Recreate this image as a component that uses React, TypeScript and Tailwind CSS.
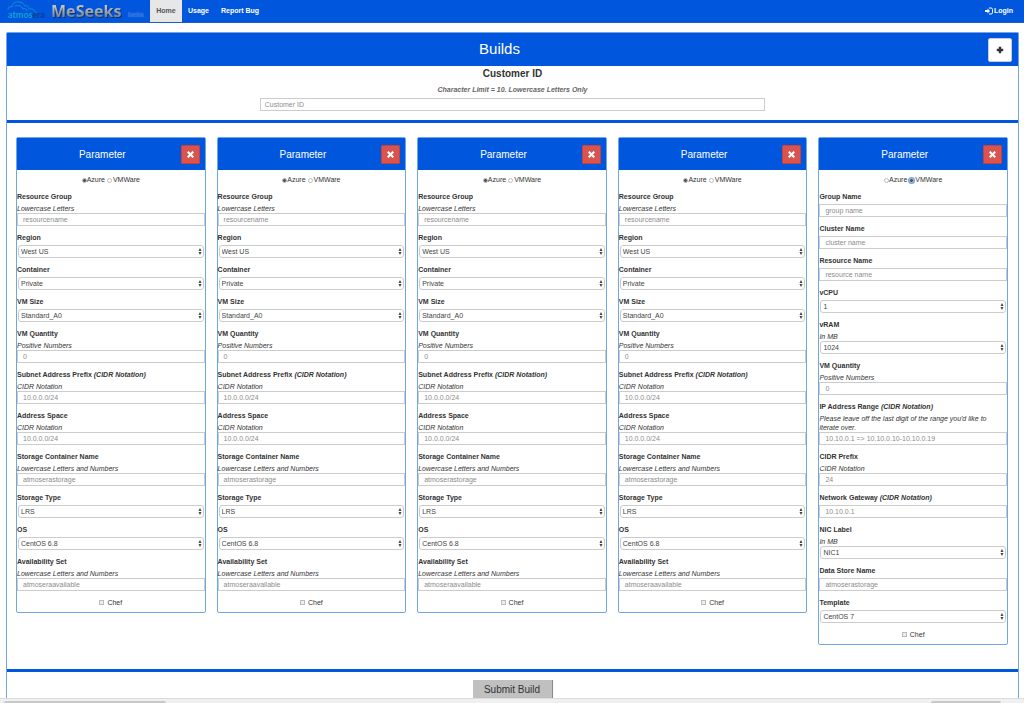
import { useId, useState } from 'react';

type Field = {
  label: string;
  note?: string;
  hint?: string;
  placeholder?: string;
  options?: string[];
};

const azureFields: Field[] = [
  { label: 'Resource Group', hint: 'Lowercase Letters', placeholder: 'resourcename' },
  { label: 'Region', options: ['West US', 'East US'] },
  { label: 'Container', options: ['Private', 'Blob'] },
  { label: 'VM Size', options: ['Standard_A0', 'Standard_A1', 'Standard_A2'] },
  { label: 'VM Quantity', hint: 'Positive Numbers', placeholder: '0' },
  { label: 'Subnet Address Prefix', note: '(CIDR Notation)', hint: 'CIDR Notation', placeholder: '10.0.0.0/24' },
  { label: 'Address Space', hint: 'CIDR Notation', placeholder: '10.0.0.0/24' },
  { label: 'Storage Container Name', hint: 'Lowercase Letters and Numbers', placeholder: 'atmoserastorage' },
  { label: 'Storage Type', options: ['LRS', 'GRS'] },
  { label: 'OS', options: ['CentOS 6.8', 'CentOS 7'] },
  { label: 'Availability Set', hint: 'Lowercase Letters and Numbers', placeholder: 'atmoseraavailable' },
];

const vmwareFields: Field[] = [
  { label: 'Group Name', placeholder: 'group name' },
  { label: 'Cluster Name', placeholder: 'cluster name' },
  { label: 'Resource Name', placeholder: 'resource name' },
  { label: 'vCPU', options: ['1', '2', '4'] },
  { label: 'vRAM', hint: 'In MB', options: ['1024', '2048', '4096'] },
  { label: 'VM Quantity', hint: 'Positive Numbers', placeholder: '0' },
  {
    label: 'IP Address Range',
    note: '(CIDR Notation)',
    hint: "Please leave off the last digit of the range you'd like to iterate over.",
    placeholder: '10.10.0.1 => 10.10.0.10-10.10.0.19',
  },
  { label: 'CIDR Prefix', hint: 'CIDR Notation', placeholder: '24' },
  { label: 'Network Gateway', note: '(CIDR Notation)', placeholder: '10.10.0.1' },
  { label: 'NIC Label', hint: 'In MB', options: ['NIC1', 'NIC2'] },
  { label: 'Data Store Name', placeholder: 'atmoserastorage' },
  { label: 'Template', options: ['CentOS 7', 'CentOS 6.8'] },
];

function Logo() {
  return (
    <svg viewBox="0 0 38 20" className="h-5 w-[38px]" aria-label="atmosera">
      <path
        d="M1 8c0-2 2-3 4-2 0-3 3-6 7-5 3 0 5 2 6 4 2-1 4 1 4 3 4-1 6 2 7 4M8 5c4-1 7 0 8 3 2-1 4 0 4 2"
        fill="none"
        stroke="#1590d8"
        strokeWidth="1"
        strokeLinecap="round"
      />
      <text x="1" y="17" fontSize="9" fontFamily="Lato, sans-serif" fill="#10a0d0">
        atmos<tspan fill="#0c3f8c">era</tspan>
      </text>
    </svg>
  );
}

function Navbar() {
  return (
    <nav className="flex h-[23px] items-center border-b border-[#1a5fc4] bg-[#0057dd] text-[7px] font-bold text-white">
      <a href="#" className="flex h-full items-center pl-[7px]">
        <Logo />
        <span className="ml-1.5 w-[76px] bg-gradient-to-b from-[#dfe6ee] via-[#9fa9b5] to-[#5a6470] bg-clip-text font-['Noto_Sans'] text-[16px] leading-[22px] font-bold text-transparent drop-shadow-[1px_1px_0_#12336e]">
          MeSeeks
        </span>
        <span className="mr-[5px] w-[18px] pt-2 text-center text-[8px] leading-[10px] font-normal text-[#0057dd] [text-shadow:0_0_1px_#b5d0f8]">
          beta
        </span>
      </a>
      <a href="#" className="flex h-full w-8 items-center justify-center bg-[#e7e7e7] text-[#555]">Home</a>
      <a href="#" className="px-1.5">Usage</a>
      <a href="#" className="px-1.5">Report Bug</a>
      <a href="#" className="mr-[11px] ml-auto flex items-center gap-px">
        <svg viewBox="0 0 16 16" className="size-2" fill="none" stroke="#fff" strokeWidth="2">
          <path d="M8 2h4q3 0 3 3v6q0 3-3 3H8" />
          <path d="M0 6h5V3l5 5-5 5v-3H0z" fill="#fff" stroke="none" />
        </svg>
        Login
      </a>
    </nav>
  );
}

function FormField({ field }: { field: Field }) {
  const id = useId();
  return (
    <div className="mb-[5px]">
      <label htmlFor={id} className="block leading-[14px] font-bold">
        {field.label} {field.note && <em>{field.note}</em>}
      </label>
      {field.hint && <p className="leading-[9px] italic">{field.hint}</p>}
      {field.options ? (
        <div className="relative px-px">
          <select
            id={id}
            className="block h-[13px] w-full appearance-none rounded-[3px] border border-[#ccc] bg-white pl-[2px] leading-[11px] text-[#444]"
          >
            {field.options.map((o) => (
              <option key={o}>{o}</option>
            ))}
          </select>
          <svg viewBox="0 0 4 7" className="pointer-events-none absolute top-[3px] right-[3px] h-[7px] w-1" fill="#444">
            <path d="M0.5 3l1.5-3 1.5 3zM0.5 4l1.5 3 1.5-3z" />
          </svg>
        </div>
      ) : (
        <input
          id={id}
          type="text"
          placeholder={field.placeholder}
          className="block h-[13px] w-full border border-[#ccc] bg-white px-[5px] leading-[10px] placeholder:overflow-visible placeholder:text-[#8c8c8c]"
        />
      )}
    </div>
  );
}

const radioClass =
  'size-[5px] appearance-none rounded-full border border-[#bbb] bg-white checked:bg-[#555]';

function ParameterCard({ initial }: { initial: string }) {
  const [provider, setProvider] = useState(initial);
  const name = useId();
  const fields = provider === 'azure' ? azureFields : vmwareFields;

  return (
    <section className="rounded-[2px] border border-[#6fa6e4] bg-white">
      <header className="flex h-8 items-center bg-[#0057dd] pr-[5px] pl-[7px]">
        <h3 className="flex-1 text-center text-[10px] text-white">Parameter</h3>
        <button
          type="button"
          aria-label="Remove"
          className="flex size-[19px] items-center justify-center rounded-[1px] border border-[#c9403b] bg-[#d9534f]"
        >
          <svg viewBox="0 0 10 10" className="size-[7px]" stroke="#fff" strokeWidth="3">
            <path d="M1 1l8 8M9 1l-8 8" />
          </svg>
        </button>
      </header>
      <div className="flex h-5 items-center justify-center gap-[2px] pt-px">
        <label className="flex items-center">
          <input
            type="radio"
            name={name}
            checked={provider === 'azure'}
            onChange={() => setProvider('azure')}
            className={radioClass}
          />
          Azure
        </label>
        <label className="flex items-center gap-px">
          <input
            type="radio"
            name={name}
            checked={provider === 'vmware'}
            onChange={() => setProvider('vmware')}
            className={`${radioClass} checked:ring-1 checked:ring-[#6fa8f5]`}
          />
          VMWare
        </label>
      </div>
      {fields.map((field) => (
        <FormField key={field.label} field={field} />
      ))}
      <label className="flex h-4 items-start justify-center gap-[3px] leading-[14px]">
        <input type="checkbox" className="mt-1 size-[5px] appearance-none border border-[#bbb] bg-[#eee] checked:bg-[#555]" />
        Chef
      </label>
    </section>
  );
}

const cards = ['azure', 'azure', 'azure', 'azure', 'vmware'];

export default function App() {
  return (
    <div className="bg-white font-['Liberation_Sans',Arial,sans-serif] text-[7px] text-[#333]">
      <Navbar />
      <main className="mx-[5px] mt-[9px] ml-1.5 rounded-t-[2px] border border-b-0 border-[#6fa6e4]">
        <header className="flex h-[33px] items-center bg-[#0057dd] pr-1.5 pl-1">
          <h2 className="flex-1 text-center text-[15px] text-white">Builds</h2>
          <button
            type="button"
            aria-label="Add"
            className="flex size-6 items-center justify-center rounded-[2px] border border-[#ccc] bg-white"
          >
            <svg viewBox="0 0 10 10" className="size-2" stroke="#333" strokeWidth="3">
              <path d="M5 1v8M1 5h8" />
            </svg>
          </button>
        </header>

        <div className="flex flex-col items-center border-b-[3px] border-[#0057dd] pb-[9px]">
          <label htmlFor="customer" className="text-[10px] leading-[15px] font-bold">Customer ID</label>
          <p className="mt-1 mb-[3px] leading-[10px] font-bold text-[#666] italic">
            Character Limit = 10. Lowercase Letters Only
          </p>
          <input
            id="customer"
            type="text"
            placeholder="Customer ID"
            className="h-[13px] w-1/2 border border-[#ccc] px-1 leading-[10px] placeholder:text-[#8c8c8c]"
          />
        </div>

        <div className="grid grid-cols-5 items-start gap-[11px] border-b-[3px] border-[#0057dd] pt-[14px] pr-2.5 pb-6 pl-[9px]">
          {cards.map((provider, i) => (
            <ParameterCard key={i} initial={provider} />
          ))}
        </div>

        <div className="flex justify-center pt-2">
          <button type="submit" className="h-[18px] w-20 border-r border-[#888] bg-[#c0c0c0] text-[10px]">
            Submit Build
          </button>
        </div>
      </main>
      <footer className="flex h-[5px] items-end justify-between border-t border-[#ddd] bg-[#f0f0f0] pr-[23px] pl-1">
        <div className="h-[2px] w-[162px] rounded-t bg-[#c8c8c8]" />
        <div className="h-[2px] w-[70px] rounded-t bg-[#c8c8c8]" />
      </footer>
    </div>
  );
}
